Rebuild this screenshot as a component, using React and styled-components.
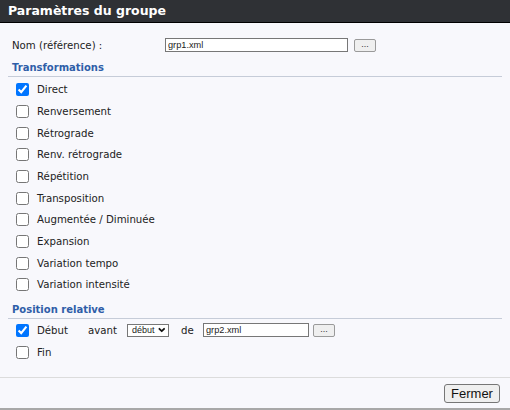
import React from "react";
import styled, { createGlobalStyle } from "styled-components";
import { ChevronDown } from "lucide-react";

const GlobalStyle = createGlobalStyle`
  html, body {
    margin: 0;
    padding: 0;
    background: #f8f8fc;
  }
  body {
    font-family: "DejaVu Sans", Verdana, sans-serif;
    font-size: 10.2px;
    color: #222;
  }
`;

const Dialog = styled.div`
  width: 510px;
  height: 410px;
  display: flex;
  flex-direction: column;
  background: #f8f8fc;
  box-sizing: border-box;
`;

const TitleBar = styled.div`
  height: 22px;
  background: #2f3135;
  border-bottom: 1px solid #000;
  color: #fff;
  font-weight: bold;
  font-size: 12.5px;
  line-height: 22px;
  padding-left: 8px;
`;

const Content = styled.div`
  flex: 1;
  padding: 15px 0 0 0;
`;

const FieldRow = styled.div`
  display: flex;
  align-items: center;
  height: 14px;
  padding-left: 12px;
`;

const FieldLabel = styled.span`
  width: 153px;
`;

const TextInput = styled.input`
  box-sizing: border-box;
  width: ${({ $w }) => $w}px;
  height: 14px;
  border: 1px solid #777;
  background: #fff;
  padding: 0 2px;
  font-family: "Liberation Sans", Arial, sans-serif;
  font-size: 9.2px;
  color: #222;
  outline: none;
`;

const DotsButton = styled.button`
  box-sizing: border-box;
  width: 22px;
  height: 13px;
  margin-left: ${({ $gap }) => $gap}px;
  padding: 0 0 3px;
  border: 1px solid #9a9a9a;
  border-radius: 2px;
  background: #efefef;
  font-family: "Liberation Sans", Arial, sans-serif;
  font-size: 9px;
  line-height: 8px;
  color: #333;
`;

const SectionTitle = styled.div`
  margin: ${({ $top }) => $top}px 8px 0;
  padding: 0 4px;
  height: 16px;
  line-height: 16px;
  font-size: 10px;
  font-weight: bold;
  color: #2f5ea8;
  border-bottom: 1px solid #c6ccd8;
`;

const List = styled.div`
  padding: ${({ $top = 2 }) => $top}px 0 0 12px;
`;

const CheckRow = styled.label`
  display: flex;
  align-items: center;
  height: 21.67px;
`;

const Check = styled.input`
  width: 13px;
  height: 13px;
  margin: 0 3px 0 4px;
  accent-color: #0075ff;
`;

const Label = styled.span`
  margin-left: 5px;
  width: ${({ $w }) => ($w ? `${$w}px` : "auto")};
`;

const Plain = styled.span`
  width: ${({ $w }) => $w}px;
`;

const SelectBox = styled.div`
  box-sizing: border-box;
  display: flex;
  align-items: center;
  gap: 2px;
  width: 42px;
  height: 13px;
  padding: 0 2px 0 4px;
  border: 1px solid #777;
  background: #fff;
  font-family: "Liberation Sans", Arial, sans-serif;
  font-size: 9px;
  color: #222;
`;

const Footer = styled.div`
  height: 30px;
  border-top: 1px solid #dcdcdc;
  border-bottom: 2px solid #a8a8a8;
  display: flex;
  align-items: center;
  justify-content: flex-end;
  padding-right: 10px;
`;

const CloseButton = styled.button`
  box-sizing: border-box;
  width: 56px;
  height: 19px;
  padding: 0;
  border: 1px solid #767676;
  border-radius: 3px;
  background: #efefef;
  font-family: "Liberation Sans", Arial, sans-serif;
  font-size: 13px;
  line-height: 17px;
  color: #111;
`;

const transformations = [
  { name: "Direct", on: true },
  { name: "Renversement" },
  { name: "Rétrograde" },
  { name: "Renv. rétrograde" },
  { name: "Répétition" },
  { name: "Transposition" },
  { name: "Augmentée / Diminuée" },
  { name: "Expansion" },
  { name: "Variation tempo" },
  { name: "Variation intensité" },
];

export default function App() {
  return (
    <Dialog>
      <GlobalStyle />
      <TitleBar>Paramètres du groupe</TitleBar>
      <Content>
        <FieldRow>
          <FieldLabel>Nom (référence) :</FieldLabel>
          <TextInput $w={183} defaultValue="grp1.xml" />
          <DotsButton $gap={6}>...</DotsButton>
        </FieldRow>

        <SectionTitle $top={8}>Transformations</SectionTitle>
        <List>
          {transformations.map((t) => (
            <CheckRow key={t.name}>
              <Check type="checkbox" defaultChecked={!!t.on} />
              <Label>{t.name}</Label>
            </CheckRow>
          ))}
        </List>

        <SectionTitle $top={6}>Position relative</SectionTitle>
        <List $top={1}>
          <CheckRow>
            <Check type="checkbox" defaultChecked />
            <Label $w={51}>Début</Label>
            <Plain $w={39}>avant</Plain>
            <SelectBox>
              début
              <ChevronDown size={10} strokeWidth={4.5} color="#111" />
            </SelectBox>
            <Plain $w={12} />
            <Plain $w={22}>de</Plain>
            <TextInput $w={106} defaultValue="grp2.xml" />
            <DotsButton $gap={4}>...</DotsButton>
          </CheckRow>
          <CheckRow>
            <Check type="checkbox" />
            <Label>Fin</Label>
          </CheckRow>
        </List>
      </Content>
      <Footer>
        <CloseButton>Fermer</CloseButton>
      </Footer>
    </Dialog>
  );
}
